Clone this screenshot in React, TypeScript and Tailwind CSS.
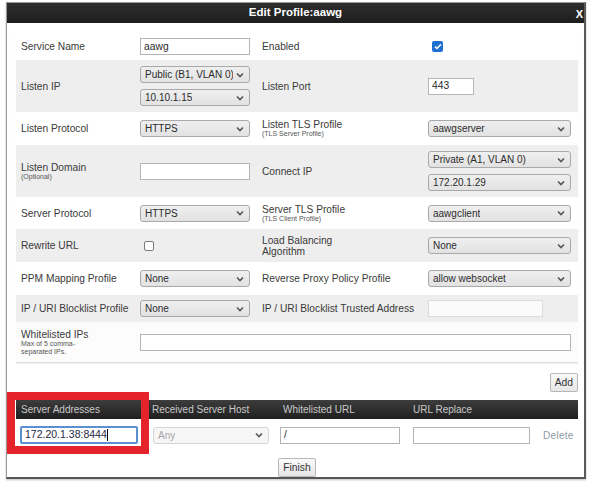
import type { ReactNode } from "react";

const FONT = "font-['Liberation_Sans',Arial,sans-serif]";

function Chevron() {
  return (
    <svg width="8" height="6" viewBox="0 0 8 6" className="shrink-0">
      <path d="M1 1.5 L4 4.5 L7 1.5" fill="none" stroke="#555" strokeWidth="1.6" />
    </svg>
  );
}

function Select({ value, w = "w-[110px]", muted = false }: { value: string; w?: string; muted?: boolean }) {
  return (
    <div
      className={`${w} h-[17px] flex items-center justify-between gap-[3px] pl-[4px] pr-[5px] rounded-[3px] border text-[10px] ${
        muted ? "border-[#d4d4d4] bg-[#f6f6f6] text-[#a5a5a5]" : "border-[#a9a9a9] bg-gradient-to-b from-[#efefef] to-[#e2e2e2] text-[#2c2c2c]"
      }`}
    >
      <span className="whitespace-nowrap overflow-hidden">{value}</span>
      <Chevron />
    </div>
  );
}

function TextInput({ value = "", w = "w-[110px]", disabled = false }: { value?: string; w?: string; disabled?: boolean }) {
  return (
    <div
      className={`${w} h-[17px] flex items-center px-[3px] border text-[10.3px] text-[#2c2c2c] ${
        disabled ? "border-[#dcdcdc] bg-[#fbfbfb]" : "border-[#b5b5b5] bg-white"
      }`}
    >
      {value}
    </div>
  );
}

function Label({ text, sub }: { text: ReactNode; sub?: ReactNode }) {
  return (
    <div className="flex flex-col justify-center text-[10.2px] leading-[11px] text-[#3a3a3a]">
      <span>{text}</span>
      {sub && <span className="text-[7px] leading-[8px] text-[#555]">{sub}</span>}
    </div>
  );
}

function Row({ h, gray, children }: { h: string; gray?: boolean; children: ReactNode }) {
  return (
    <div className={`${h} grid grid-cols-[124px_122px_166px_150px] items-center ${gray ? "bg-[#eeeeee]" : "bg-white"}`}>
      {children}
    </div>
  );
}

function Button({ children }: { children: ReactNode }) {
  return (
    <div className="h-[19px] px-[4px] flex items-center rounded-[2px] border border-[#b8b8b8] bg-gradient-to-b from-[#fafafa] to-[#e6e6e6] text-[10.3px] text-[#333]">
      {children}
    </div>
  );
}

export default function App() {
  return (
    <div className={`w-[589px] h-[485px] bg-white pt-[2px] pl-[6px] ${FONT}`}>
      <div className="w-[580px] h-[477px] border border-[#9a9a9a] border-r-[2px] border-r-[#5a5a5a] border-b-[2px] border-b-[#555] flex flex-col bg-white shadow-[0_1px_2px_rgba(0,0,0,0.25)]">
        {/* title bar */}
        <div className="h-[20px] bg-gradient-to-b from-[#2e2e2e] to-[#1e1e1e] flex items-center relative">
          <span className="flex-1 text-center text-[11.5px] font-bold text-white">Edit Profile:aawg</span>
          <span className="absolute right-[1px] top-[3px] text-[11px] font-bold text-white">X</span>
        </div>

        <div className="pl-[9px] pr-[6px] pt-[10px] flex flex-col">
          {/* form panel */}
          <div className="flex flex-col border-b border-[#dcdcdc] shadow-[0_1px_1px_rgba(0,0,0,0.06)]">
            <Row h="h-[27px]">
              <div className="pl-[5px]"><Label text="Service Name" /></div>
              <TextInput value="aawg" />
              <Label text="Enabled" />
              <div className="pl-[4px]">
                <div className="w-[11px] h-[11px] rounded-[2px] bg-[#1f6fd1] flex items-center justify-center">
                  <svg width="8" height="7" viewBox="0 0 8 7">
                    <path d="M1 3.6 L3 5.5 L7 1.2" fill="none" stroke="white" strokeWidth="1.5" />
                  </svg>
                </div>
              </div>
            </Row>

            <Row h="h-[52px]" gray>
              <div className="pl-[5px]"><Label text="Listen IP" /></div>
              <div className="flex flex-col gap-[6px]">
                <Select value="Public (B1, VLAN 0)" />
                <Select value="10.10.1.15" />
              </div>
              <Label text="Listen Port" />
              <TextInput value="443" w="w-[46px]" />
            </Row>

            <Row h="h-[33px]">
              <div className="pl-[5px]"><Label text="Listen Protocol" /></div>
              <Select value="HTTPS" />
              <Label text="Listen TLS Profile" sub="(TLS Server Profile)" />
              <Select value="aawgserver" w="w-[143px]" />
            </Row>

            <Row h="h-[52px]" gray>
              <div className="pl-[5px]"><Label text="Listen Domain" sub="(Optional)" /></div>
              <TextInput />
              <Label text="Connect IP" />
              <div className="flex flex-col gap-[6px]">
                <Select value="Private (A1, VLAN 0)" w="w-[143px]" />
                <Select value="172.20.1.29" w="w-[143px]" />
              </div>
            </Row>

            <Row h="h-[32px]">
              <div className="pl-[5px]"><Label text="Server Protocol" /></div>
              <Select value="HTTPS" />
              <Label text="Server TLS Profile" sub="(TLS Client Profile)" />
              <Select value="aawgclient" w="w-[143px]" />
            </Row>

            <Row h="h-[33px]" gray>
              <div className="pl-[5px]"><Label text="Rewrite URL" /></div>
              <div className="pl-[4px]">
                <div className="w-[10px] h-[10px] rounded-[2px] border border-[#7a7a7a] bg-white" />
              </div>
              <Label text={<>Load Balancing<br />Algorithm</>} />
              <Select value="None" w="w-[143px]" />
            </Row>

            <Row h="h-[33px]">
              <div className="pl-[5px]"><Label text="PPM Mapping Profile" /></div>
              <Select value="None" />
              <Label text="Reverse Proxy Policy Profile" />
              <Select value="allow websocket" w="w-[143px]" />
            </Row>

            <Row h="h-[27px]" gray>
              <div className="pl-[5px]"><Label text="IP / URI Blocklist Profile" /></div>
              <Select value="None" />
              <Label text="IP / URI Blocklist Trusted Address" />
              <TextInput w="w-[115px]" disabled />
            </Row>

            <div className="h-[40px] flex items-center bg-[#fcfcfc]">
              <div className="w-[124px] pl-[5px]">
                <div className="flex flex-col text-[10.2px] leading-[11px] text-[#3a3a3a]">
                  <span>Whitelisted IPs</span>
                  <span className="text-[7px] leading-[8px] text-[#555] w-[70px]">Max of 5 comma-separated IPs.</span>
                </div>
              </div>
              <TextInput w="w-[431px]" />
            </div>
          </div>

          {/* add */}
          <div className="mt-[10px] flex justify-end">
            <Button>Add</Button>
          </div>

          {/* server addresses table */}
          <div className="mt-[8px] h-[19px] flex items-center bg-gradient-to-b from-[#3d3d3d] to-[#1f1f1f] text-[10px] text-[#c9c9c9]">
            <span className="w-[131px] pl-[5px]">Server Addresses</span>
            <span className="w-[131px] pl-[5px]">Received Server Host</span>
            <span className="w-[131px] pl-[5px]">Whitelisted URL</span>
            <span className="w-[126px] pl-[4px]">URL Replace</span>
          </div>
          <div className="h-[32px] flex items-center">
            <div className="w-[131px] pl-[4px]">
              <div className="w-[118px] h-[18px] flex items-center px-[3px] border-2 border-[#5b8fd0] rounded-[2px] bg-white text-[10.5px] text-[#1f2a44]">
                172.20.1.38:8444<span className="w-px h-[12px] bg-black" />
              </div>
            </div>
            <div className="w-[131px] pl-[6px]">
              <Select value="Any" w="w-[116px]" muted />
            </div>
            <div className="w-[131px] pl-[2px]">
              <TextInput value="/" w="w-[120px]" />
            </div>
            <div className="w-[126px] pl-[4px]">
              <TextInput w="w-[117px]" />
            </div>
            <span className="pl-[8px] text-[10px] tracking-[0.3px] text-[#8c9aa6]">Delete</span>
          </div>

          {/* finish */}
          <div className="mt-[7px] flex justify-center">
            <Button>Finish</Button>
          </div>
        </div>
      </div>

      {/* annotation highlight */}
      <div className="absolute left-[7px] top-[392px] w-[142px] h-[62px] border-[8px] border-[#e5232b]" />
    </div>
  );
}
